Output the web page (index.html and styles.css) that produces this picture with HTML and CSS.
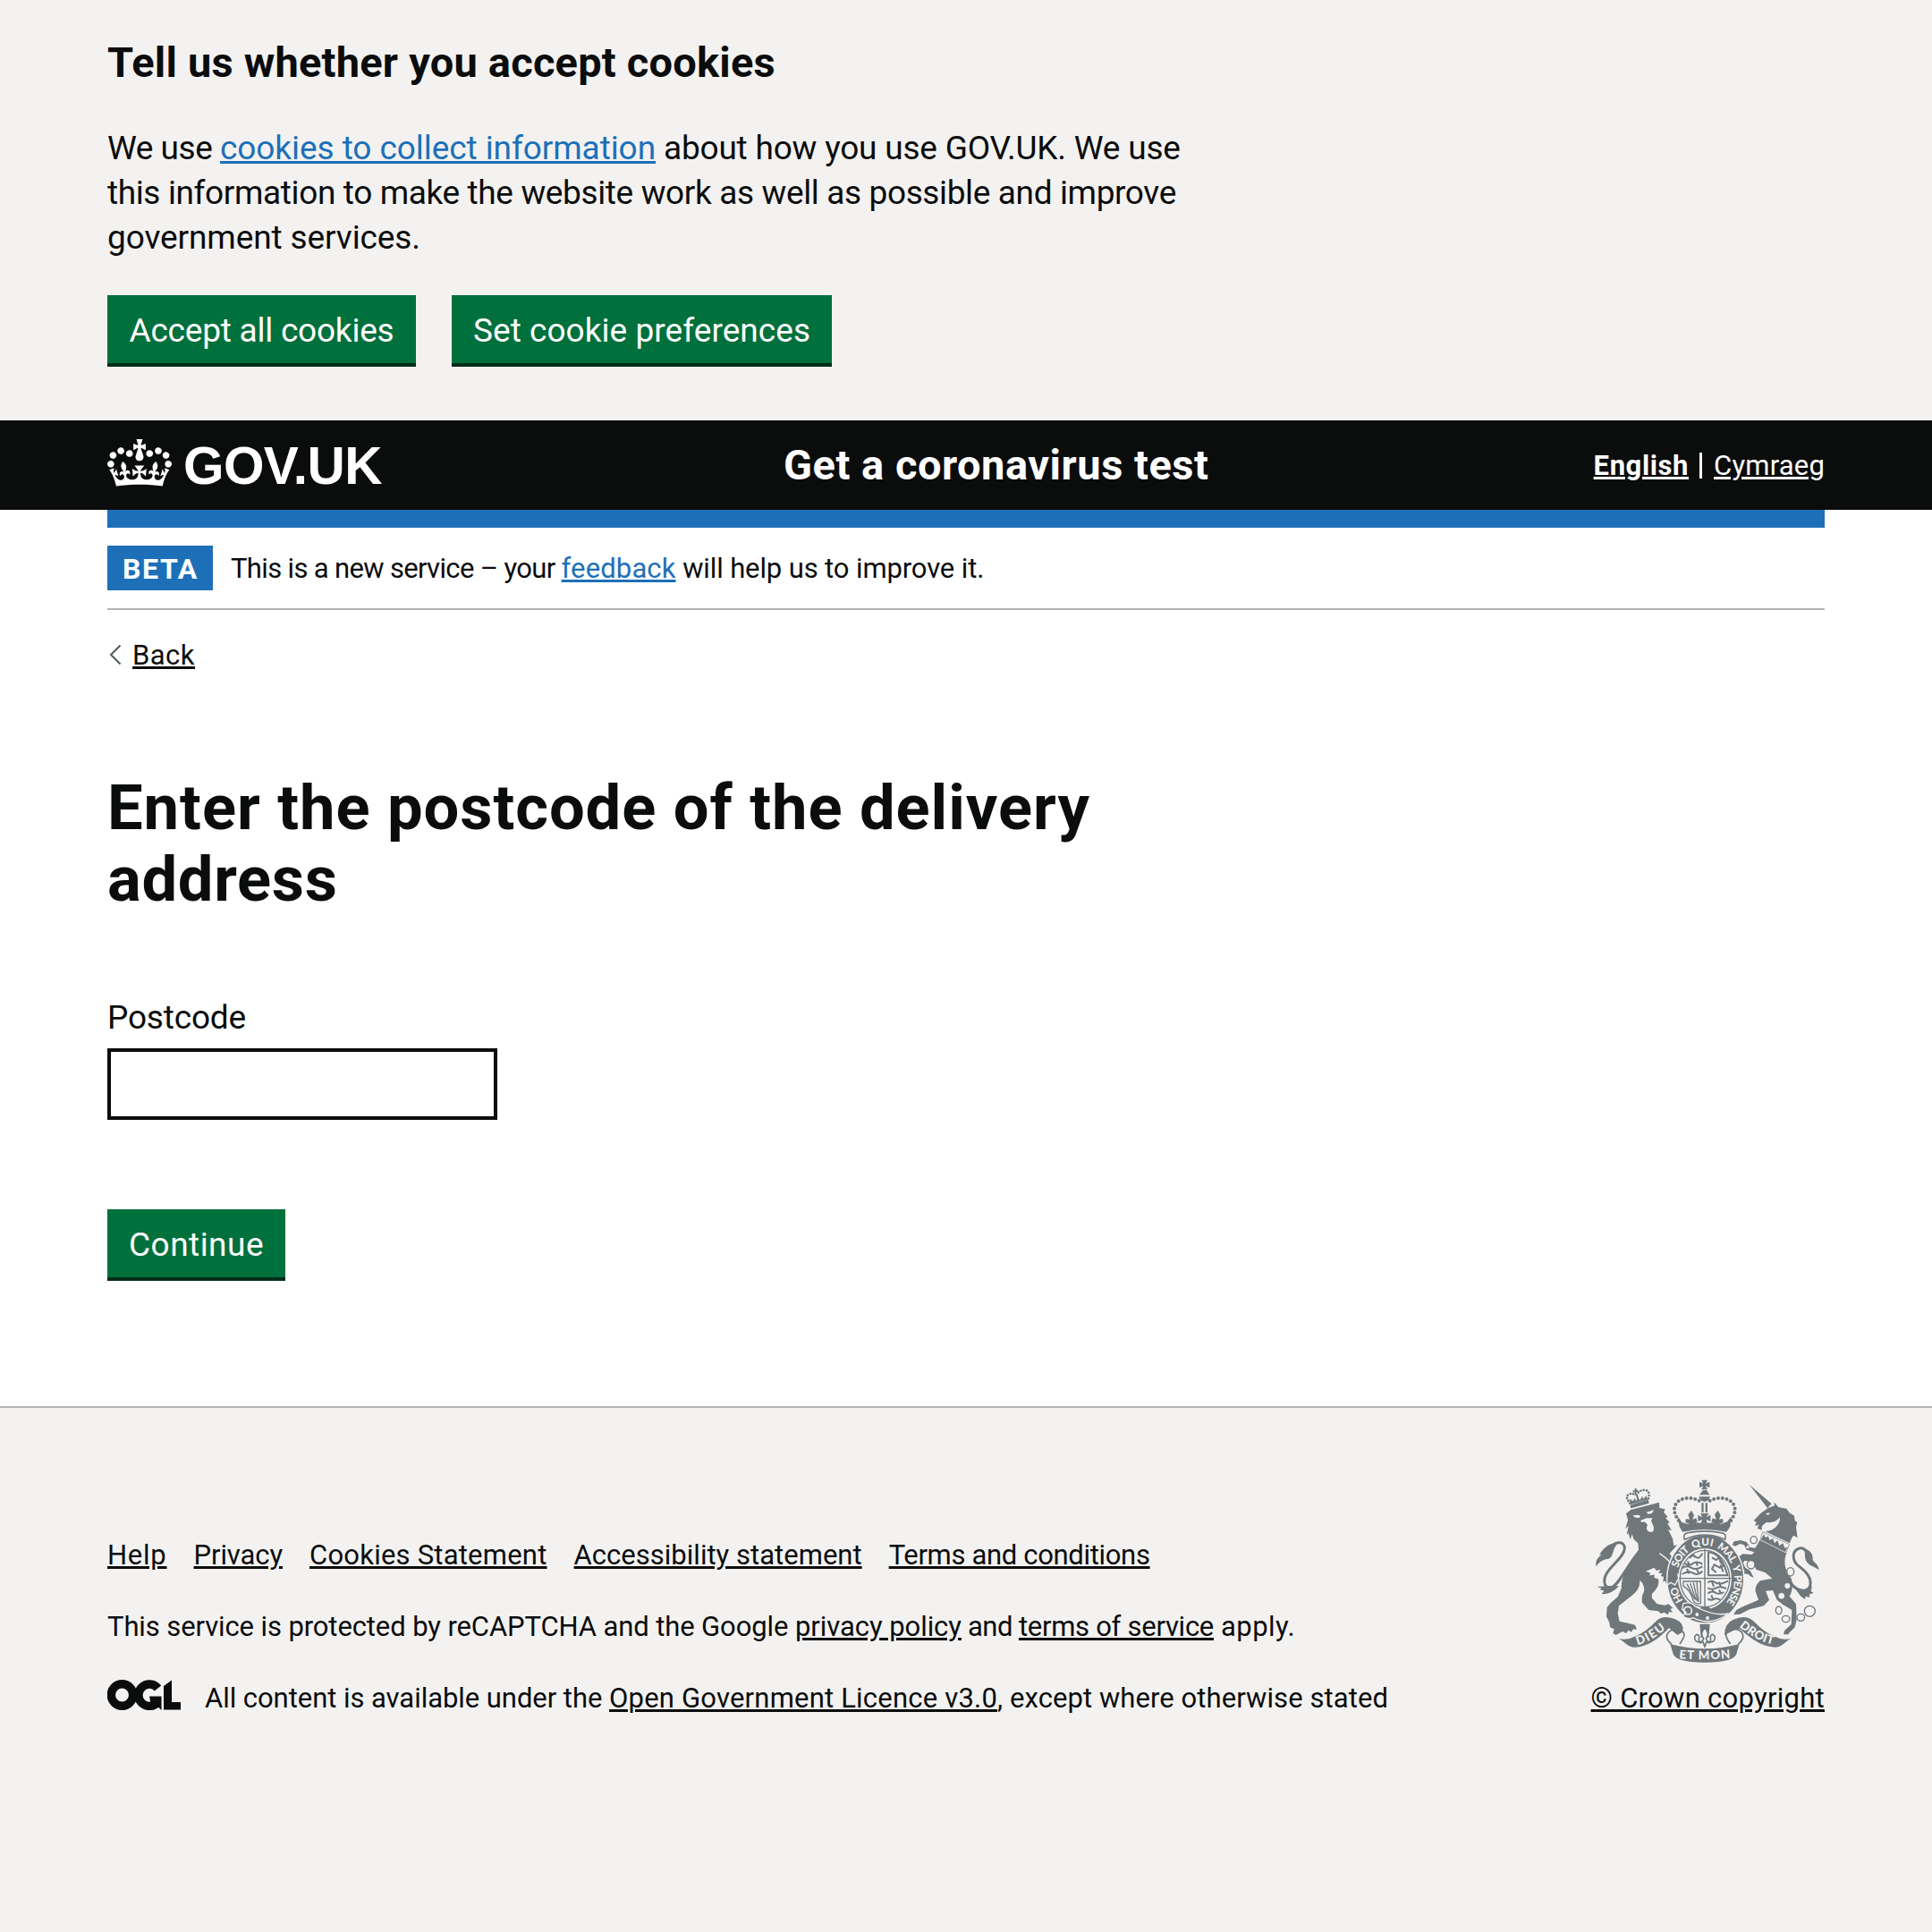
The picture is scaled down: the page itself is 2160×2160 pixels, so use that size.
FILE: index.html
```html
<!DOCTYPE html>
<html lang="en">
<head>
<meta charset="utf-8">
<title>Enter the postcode of the delivery address</title>
<link rel="stylesheet" href="styles.css">
</head>
<body>
<section class="cookie-banner">
  <div class="container">
    <h2 class="banner-title">Tell us whether you accept cookies</h2>
    <p class="banner-text"><span class="t-we">We use </span><a class="link t-cookies" href="#">cookies to collect information</a><span class="t-about"> about how you use GOV.UK. We use</span> <span class="t-info">this information to make the website work as well as possible and improve</span> <span class="t-gov">government services.</span></p>
    <div class="button-row">
      <button class="button button-accept">Accept all cookies</button>
      <button class="button button-set">Set cookie preferences</button>
    </div>
  </div>
</section>

<header class="header">
  <div class="container header-inner">
    <a class="logo" href="#">
      <svg class="crown" viewBox="0 0 132 97" aria-hidden="true"><path fill="currentColor" fill-rule="evenodd" d="M25 30.2c3.5 1.5 7.7-.2 9.1-3.7 1.5-3.6-.2-7.8-3.9-9.2-3.6-1.4-7.6.3-9.1 3.9-1.4 3.5.3 7.5 3.9 9zM9 39.5c3.6 1.5 7.8-.2 9.2-3.7 1.5-3.6-.2-7.8-3.9-9.1-3.6-1.5-7.6.2-9.1 3.8-1.4 3.5.3 7.5 3.8 9zM4.4 57.2c3.5 1.5 7.7-.2 9.1-3.8 1.5-3.6-.2-7.7-3.9-9.1-3.5-1.5-7.6.3-9.1 3.8-1.4 3.5.3 7.6 3.9 9.1zm38.3-21.4c3.5 1.5 7.7-.2 9.1-3.8 1.5-3.6-.2-7.7-3.9-9.1-3.6-1.5-7.6.3-9.1 3.8-1.3 3.6.4 7.7 3.9 9.1zm64.4-5.6c-3.6 1.5-7.8-.2-9.1-3.7-1.5-3.6.2-7.8 3.8-9.2 3.6-1.4 7.7.3 9.2 3.9 1.3 3.5-.4 7.5-3.9 9zm15.9 9.3c-3.6 1.5-7.7-.2-9.1-3.7-1.5-3.6.2-7.8 3.7-9.1 3.6-1.5 7.7.2 9.2 3.8 1.5 3.5-.3 7.5-3.8 9zm4.7 17.7c-3.6 1.5-7.8-.2-9.2-3.8-1.5-3.6.2-7.7 3.9-9.1 3.6-1.5 7.7.3 9.2 3.8 1.3 3.5-.4 7.6-3.9 9.1zM89.3 35.8c-3.6 1.5-7.8-.2-9.2-3.8-1.4-3.6.2-7.7 3.9-9.1 3.6-1.5 7.7.3 9.2 3.8 1.4 3.6-.3 7.7-3.9 9.1zM69.7 17.7l8.9 4.7V9.3l-8.9 2.8c-.2-.3-.5-.6-.9-.9L72.4 0H59.6l3.5 11.2c-.3.3-.6.5-.9.9l-8.8-2.8v13.1l8.8-4.7c.3.3.6.7.9.9l-5 15.4v.1c-.2.8-.4 1.6-.4 2.4 0 4.1 3.1 7.5 7 8.1h.2c.3 0 .7.1 1 .1.4 0 .7 0 1-.1h.2c4-.6 7.1-4.1 7.1-8.1 0-.8-.1-1.7-.4-2.4V34l-5.1-15.4c.4-.2.7-.6 1-.9zM66 92.8c16.9 0 32.8 1.1 47.1 3.2 4-16.9 8.9-26.7 14-33.5l-9.6-3.4c1 4.9 1.1 7.2 0 10.2-1.5-1.4-3-4.3-4.2-8.7L108.6 76c2.8-2 5-3.2 7.5-3.3-4.4 9.4-10 11.9-13.6 11.2-4.3-.8-6.3-4.6-5.6-7.9 1-4.7 5.7-5.9 8-.5 4.3-8.7-3-11.4-7.6-8.8 7.1-7.2 7.9-13.5 2.1-21.1-8 6.1-8.1 12.3-4.5 20.8-4.7-5.4-12.1-2.5-9.5 6.2 3.4-5.2 7.9-2 7.2 3.1-.6 4.3-6.4 7.8-13.5 7.2-10.3-.9-10.9-8-11.2-13.8 2.5-.5 7.1 1.8 11 7.3L80.2 60c-4.1 4.4-8 5.3-12.3 5.4 1.4-4.4 8-11.6 8-11.6H55.5s6.4 7.2 7.9 11.6c-4.2-.1-8-1-12.3-5.4l1.4 16.4c3.9-5.5 8.5-7.7 10.9-7.3-.3 5.8-.9 12.8-11.1 13.8-7.2.6-12.9-2.9-13.5-7.2-.7-5 3.8-8.3 7.1-3.1 2.7-8.7-4.6-11.6-9.4-6.2 3.7-8.5 3.6-14.7-4.6-20.8-5.8 7.6-5 13.9 2.2 21.1-4.7-2.6-11.9.1-7.7 8.8 2.3-5.5 7.1-4.2 8.1.5.7 3.3-1.3 7.1-5.7 7.9-3.5.7-9-1.8-13.5-11.2 2.5.1 4.7 1.3 7.5 3.3l-4.7-15.4c-1.2 4.4-2.7 7.2-4.3 8.7-1.1-3-.9-5.3 0-10.2l-9.5 3.4c5 6.9 9.9 16.7 14 33.5 14.8-2.1 30.8-3.2 47.700-3.200z"/></svg>
      <span class="logo-text">GOV.UK</span>
    </a>
    <a class="service-name" href="#">Get a coronavirus test</a>
    <nav class="languages"><a class="lang-en" href="#">English</a><span class="lang-sep"></span><a class="lang-cy" href="#">Cymraeg</a></nav>
  </div>
</header>

<div class="container page">
  <div class="phase-banner">
    <strong class="phase-tag">BETA</strong>
    <span class="phase-text"><span class="t-new">This is a new service – your </span><a class="link" href="#">feedback</a><span> will help us to improve it.</span></span>
  </div>
  <a class="back" href="#">
    <svg class="back-icon" viewBox="0 0 14 24" aria-hidden="true"><path d="M12.500 1.500 2 12l10.500 10.500"/></svg>
    <span class="back-text">Back</span>
  </a>
  <main>
    <h1 class="title">Enter the postcode of the delivery <span class="title-end">address</span></h1>
    <label class="label" for="postcode">Postcode</label>
    <input class="input" id="postcode" type="text">
    <button class="button button-continue">Continue</button>
  </main>
</div>

<footer class="footer">
  <div class="container footer-inner">
    <div class="footer-meta">
      <nav class="footer-links">
        <a class="f-help" href="#">Help</a>
        <a class="f-privacy" href="#">Privacy</a>
        <a class="f-cookies" href="#">Cookies Statement</a>
        <a class="f-access" href="#">Accessibility statement</a>
        <a class="f-terms" href="#">Terms and conditions</a>
      </nav>
      <p class="footer-line"><span class="r-this">This service is protected by reCAPTCHA and the Google </span><a href="#">privacy policy</a><span class="r-and"> and </span><a class="r-terms" href="#">terms of service</a><span class="r-apply"> apply.</span></p>
      <div class="licence">
        <svg class="ogl" viewBox="0 0 82 34" aria-hidden="true">
          <g fill="none" stroke="currentColor" stroke-width="9.500">
            <circle cx="16.500" cy="17" r="12.200"/>
            <path d="M56.500 9.500A12.200 12.200 0 1 0 56 25.500"/>
          </g>
          <path fill="currentColor" d="M47 18.500h13.500V34l-4-4-5 1-3.500-7zM63 7l9-6.500V25h10v8.500H63z"/>
        </svg>
        <p class="footer-line"><span>All content is available under the </span><a class="l-ogl" href="#">Open Government Licence v3.0</a><span class="l-except">, except where otherwise stated</span></p>
      </div>
    </div>
    <div class="crest-block">
      <svg class="crest" viewBox="72 70 750 615" aria-hidden="true">
        <defs>
          <path id="motto-arc" d="M372 484A97 112 0 1 1 502 490"/>
          <path id="dieu-arc" d="M212 625C250 616 282 594 314 566"/>
          <path id="etmon-arc" d="M352 671Q438 677 526 669"/>
          <path id="droit-arc" d="M553 563C587 593 625 617 674 625"/>
        </defs>

        <!-- lion -->
        <g class="ink">
          <path d="M174 184L190 172 285 147 286 166 305 170 300 180 314 196 306 199 320 214 313 218 327 242 315 238 330 268 334 292 346 290 320 318Q344 350 346 396L338 416 330 410 328 424 318 414 312 424 304 410 298 414 300 396 290 394 296 384 282 384 290 372 276 376 268 366 240 378 256 384 252 392 270 390 268 400 282 404C286 420 278 436 268 446Q256 456 262 470L278 488 304 492 316 488 332 502 322 504 330 516 318 514 314 524 302 516 290 520 282 512 250 508 228 484Q224 464 234 446 238 424 220 408 222 440 190 462L150 494 146 520 152 546 180 552 204 558 210 574 198 572 192 582 182 576 174 586 162 580 140 592 130 586 134 572 120 566 118 550 108 530 110 500 120 486 146 464 158 436C158 390 180 350 216 306L214 284 200 272 194 254 188 272 182 250 176 256 182 226 172 236 180 206Z"/>
          <path d="M142 282C124 282 98 296 84 324L94 322C76 332 70 348 74 362 84 344 104 336 116 336 132 330 128 304 142 290Z"/>
          <path d="M76 430L92 435 86 441 100 442 92 455Q128 454 150 428L132 426Z"/>
        </g>
        <path class="tail" d="M190 350C160 390 150 420 122 436 96 432 94 400 118 372 140 346 170 322 169 298 166 280 146 278 132 288"/>
        <path class="ink" d="M187 156L248 138 251 150 190 167Z"/>
        <path class="crown-leaf" d="M190 154L186 136 197 144 203 134 207 146 214 132 220 142 228 128 231 138 241 126 246 138"/>
        <path class="crown-cross" d="M206 100V124M197 110L215 108M209 120L214 136"/>
        <path class="small-dots" d="M187 150Q168 128 184 120 196 114 206 124M249 134Q256 108 238 106 222 104 210 120"/>
        <g class="paper">
          <path d="M196 192Q210 186 222 192L218 199Q206 200 196 192ZM242 180L268 172 260 184 248 186Z"/>
          <path d="M222 208L242 200 262 200 258 210 264 222C272 244 262 248 254 246 244 244 240 234 246 222L236 212 226 214Z"/>
        </g>

        <!-- unicorn -->
        <g class="ink">
          <path d="M587 87L662 152 648 166Z"/>
          <path d="M650 166L672 158 670 146 685 163 712 168 722 182 738 192 740 208 748 214 744 230 749 266 736 258 730 266 722 284 640 244C668 244 692 222 690 196 680 212 660 216 644 214L630 226 628 240 614 234 620 222 606 226 611 214 602 208 625 184Z"/>
          <path d="M622 274L712 318C698 350 712 384 728 402 734 424 732 446 722 462L744 488 746 540 740 566 722 584 718 590 702 590 706 576 728 556 730 508 700 490 680 474 666 442 642 444 654 474 636 494 588 506 556 522 534 524 544 508 562 498 618 474 608 446Q606 424 624 410L664 402 640 382 610 372 600 348 572 342 566 350 574 366 590 376 602 400 590 394 584 388 568 386 572 378 556 358 546 346 548 332 566 320 596 322 604 314 578 306 570 290 556 286 540 294 530 290 536 278 558 274 578 280 590 298 606 300 614 290Z"/>
          <path d="M770 303C790 304 802 320 800 340 806 352 818 352 821 374 806 362 786 360 778 344 772 330 776 318 770 303Z"/>
          <path d="M742 438Q776 452 798 426L794 446 803 450 788 456 790 466 776 462 774 472 760 462Z"/>
        </g>
        <path class="tail" d="M724 412C740 444 778 452 790 430 800 400 776 378 752 360 732 344 728 312 752 302 762 298 770 300 778 310"/>
        <path class="collar" d="M632 246L722 288 710 318 624 273Z"/>
        <path class="ink" d="M626 272L636 254 642 266 650 260 656 274 666 268 672 284 682 274 688 292 700 284 706 300 716 296 708 314Z"/>
        <path class="paper" d="M642 184L658 182 650 190Z"/>
        <g class="chain">
          <ellipse cx="602" cy="273" rx="11" ry="12"/><ellipse cx="593" cy="356" rx="13" ry="14"/>
          <ellipse cx="725" cy="380" rx="12" ry="14"/>
          <ellipse cx="686" cy="509" rx="10" ry="13"/><ellipse cx="710" cy="538" rx="13" ry="11"/><ellipse cx="760" cy="533" rx="13" ry="12"/><circle cx="790" cy="512" r="18"/>
        </g>
        <g class="paper"><circle cx="715" cy="427" r="9"/><circle cx="695" cy="461" r="10"/><circle cx="582" cy="297" r="5"/></g>

        <!-- crown -->
        <g class="ink">
          <path d="M427 72h20l-6 12 13-6v20l-13-6 6 12h-20l6-12-13 6v-20l13 6zM432 106h12l10 16h-34zM418 128h38q-3 14-19 17-16-3-19-17z"/>
          <path d="M427 149h7v32h-7zM440 149h7v32h-7zM424 184h28l-9 13 14-8v22l-14-7 4 13h-22l4-13-14 7v-22l14 8z"/>
          <path d="M393 174l9 16-5 14 12-4 4 12-20 10-20-8 2-12 12 2-5-16zM482 174l9 16-5 14 12-2 2 12-18 8-22-10 4-12 12 4-5-16z"/>
          <path d="M347 194l14 20 22 6 20-6 34 4 34-4 20 6 22-8 14-18-4 34-12 18q-74-16-148 0l-10-18z"/>
        </g>
        <g class="dots">
          <path d="M350 208C306 146 374 116 420 142"/><path d="M526 208C568 146 500 116 454 142"/>
        </g>

        <!-- garter and shield -->
        <ellipse class="garter" cx="440" cy="404" rx="129" ry="149"/>
        <path class="rim" d="M370 272Q362 252 382 249 438 238 492 249 514 252 506 272 438 240 370 272Z"/>
        <ellipse class="paper" cx="438" cy="403" rx="90" ry="102"/>
        <path class="thin" d="M438 303v202M349 402h178"/>
        <ellipse class="thin" cx="438" cy="403" rx="83" ry="95"/>
        <g class="charges">
          <path d="M386 334q12-14 22-4t22-12M370 352q16 10 28 0t32 2M362 368q14-12 30-2t38-4M362 388q22-14 36-4t32-6M398 320l8 12M380 344l6 12M408 346l6 14M378 370l8 16M410 368l8 18"/>
          <path d="M448 416q12-10 26 0t42-6M448 434q14 8 28 0t34 2M448 452q16-10 26-2t28-2M448 470q12 8 20 2t22 2M462 412l6 18M486 414l6 18M462 436l6 14M486 440l6 14M460 458l6 16"/>
          <path d="M450 314q46 4 64 78h-64zM462 332l14 8 10-8 4 14 12 14-14 6-18-10-8 14 14 12M490 356l10 24"/>
        </g>
        <path class="harp" d="M366 412h58v74q-16 4-24-8-12-40-34-50zM378 420l26 52M389 418l20 58M400 416l14 64M411 414l6 66"/>
        <path class="ink" d="M426 498h26l8 12-22 10-20-10z"/>
        <g class="motto">
          <text><textPath href="#motto-arc" startOffset="10" textLength="52">HO</textPath></text>
          <text><textPath href="#motto-arc" startOffset="124" textLength="72">SOIT</textPath></text>
          <text><textPath href="#motto-arc" startOffset="208" textLength="68">QUI</textPath></text>
          <text><textPath href="#motto-arc" startOffset="290" textLength="72">MAL</textPath></text>
          <text><textPath href="#motto-arc" startOffset="372">Y</textPath></text>
          <text><textPath href="#motto-arc" startOffset="402" textLength="98">PENSE</textPath></text>
        </g>
        <path class="paw" d="M286 318C302 329 314 339 323 350M347 386L350 402 338 424 324 416 312 424"/>
        <path class="ink outlined" d="M366 486q26-8 40 10 60 34 112 24-60 44-120 14-18 8-34-6l12-12-14-10z"/>
        <circle class="paper" cx="412" cy="523" r="6"/><circle class="paper" cx="447" cy="535" r="6"/>
        <circle class="buckle" cx="381" cy="510" r="13"/>

        <!-- fleur-de-lis -->
        <path class="ink" d="M421 555h34l-4 46h-26z"/>
        <path class="lily" d="M438 568q-18 18-4 36l-6 10q-8 4-10-6 4-16-6-18-14 6-4 22l16 6 8-4 6 18 6-18 8 4 16-6q10-16-4-22-10 2-6 18-2 10-10 6l-6-10q14-18-4-36z"/>

        <!-- scroll -->
        <path class="ribbon" d="M326 622C298 600 310 572 348 572 384 584 364 606 354 622M550 622C578 600 568 572 532 572 494 580 512 606 524 622"/>
        <g class="ink">
          <path d="M148 603Q176 612 206 596 240 582 276 544 300 522 342 540 370 552 364 582L346 592 318 568C286 602 246 634 200 633 176 630 168 612 148 603Z"/>
          <path d="M728 603Q700 612 670 596 636 582 600 544 574 522 534 540 504 552 504 592L540 574 556 572C590 602 630 634 676 633 700 630 708 612 728 603Z"/>
          <path d="M322 622Q438 654 554 622L544 656Q534 684 438 684 342 684 332 656Z"/>
        </g>
        <g>
          <text><textPath href="#dieu-arc" textLength="110">DIEU</textPath></text>
          <text><textPath href="#etmon-arc" textLength="172">ET MON</textPath></text>
          <text><textPath href="#droit-arc" textLength="130">DROIT</textPath></text>
        </g>
      </svg>
      <a class="copyright" href="#">© Crown copyright</a>
    </div>
  </div>
</footer>
</body>
</html>
```
FILE: styles.css
```css
* { box-sizing: border-box; }
body { margin: 0; background: #f3f2f1; color: #0b0c0c; font: 400 31px/40px Roboto, "Liberation Sans", sans-serif; }
h1, h2, p { margin: 0; }
a { color: inherit; text-decoration-line: underline; text-decoration-thickness: 3px; text-underline-offset: 2px; }
.container { width: 1920px; margin: 0 auto; }
.link { color: #1d70b8; }

.button { display: block; height: 80px; padding: 3px 0 0; border: 0; border-bottom: 4px solid #002d18; border-radius: 0; background: #00703c; color: #fff; font: 400 37px/73px Roboto, "Liberation Sans", sans-serif; text-align: center; }
.button-row { display: flex; gap: 40px; margin-top: 39px; }
.button-accept { width: 345px; letter-spacing: -.22px; }
.button-set { width: 425px; letter-spacing: .05px; }
.button-continue { width: 199px; margin-top: 100px; letter-spacing: .48px; }

.cookie-banner { height: 470px; padding-top: 40px; }
.banner-title { font-size: 47px; line-height: 60px; letter-spacing: .21px; }
.banner-text { width: 1240px; margin-top: 41px; font-size: 37px; line-height: 50px; }
.t-we { letter-spacing: -.48px; }
.t-cookies { letter-spacing: -.07px; }
.t-about { letter-spacing: -.2px; }
.t-info { letter-spacing: -.37px; }
.t-gov { letter-spacing: -.1px; }

.header { background: #0b0c0c; color: #fff; }
.header-inner { display: grid; grid-template-columns: 756px 1fr auto; align-items: center; height: 100px; }
.logo { display: flex; align-items: center; gap: 13px; height: 100px; text-decoration: none; }
.crown { width: 72px; height: 53px; margin-bottom: 5px; }
.logo-text { padding-top: 1px; font: 700 58.5px/60px "Liberation Sans", Arial, sans-serif; letter-spacing: -.6px; }
.service-name { font-size: 47px; line-height: 60px; font-weight: 700; letter-spacing: .52px; text-decoration: none; }
.languages { display: flex; align-items: center; padding-top: 2px; }
.lang-en { font-weight: 700; letter-spacing: .6px; }
.lang-sep { width: 3px; height: 29px; margin: 0 13px 2px 12px; background: #fff; }
.lang-cy { letter-spacing: .19px; }

.page { height: 1002px; border-top: 20px solid #1d70b8; }
body { background: linear-gradient(#f3f2f1 500px, #fff 500px, #fff 1572px, #f3f2f1 1572px); }
.phase-banner { display: flex; gap: 20px; height: 92px; padding: 20px 0; border-bottom: 2px solid #b1b4b6; }
.phase-tag { width: 118px; height: 50px; padding: 2px 0 0 1px; background: #1d70b8; color: #fff; font-size: 32px; line-height: 48px; letter-spacing: 1.6px; text-align: center; }
.phase-text { padding-top: 1px; line-height: 50px; letter-spacing: -.12px; }
.t-new { letter-spacing: -.66px; }
.phase-text .link { letter-spacing: .13px; }
.back { display: flex; align-items: center; gap: 12px; width: 98px; height: 40px; margin-top: 30px; padding-left: 2px; text-decoration: none; }
.back-icon { width: 14px; height: 24px; fill: none; stroke: #505a5f; stroke-width: 2; }
.back-text { padding-top: 2px; text-decoration: underline 3px; text-underline-offset: 2px; letter-spacing: .47px; }

.title { width: 1240px; margin-top: 111px; font-size: 70.5px; line-height: 80px; font-weight: 700; letter-spacing: .95px; }
.title-end { letter-spacing: .7px; }
.label { display: block; margin-top: 90px; font-size: 37px; line-height: 50px; letter-spacing: -.17px; }
.input { display: block; width: 436px; height: 80px; margin-top: 9px; padding: 10px; border: 4px solid #0b0c0c; border-radius: 0; background: #fff; font: inherit; }

.footer { padding-top: 80px; border-top: 2px solid #b1b4b6; background: #f3f2f1; }
.footer-inner { display: flex; justify-content: space-between; }
.footer-meta { display: flex; flex-direction: column; gap: 40px; padding-top: 65px; }
.footer-links { display: flex; gap: 30px; }
.f-help { letter-spacing: .75px; }
.f-privacy { letter-spacing: -.09px; }
.f-cookies { letter-spacing: .22px; }
.f-access { letter-spacing: .02px; }
.f-terms { letter-spacing: -.33px; }
.footer-line { white-space: nowrap; letter-spacing: -.05px; }
.r-this { letter-spacing: -.11px; }
.r-and { letter-spacing: -.57px; }
.r-terms { letter-spacing: -.28px; }
.r-apply { letter-spacing: .41px; }
.l-ogl { letter-spacing: .2px; }
.l-except { letter-spacing: .08px; }
.licence { display: flex; gap: 27px; }
.ogl { width: 82px; height: 34px; margin-top: -1px; }
.crest-block { display: flex; flex-direction: column; align-items: flex-end; }
.crest { width: 250px; height: 205px; margin: 0 6px 20px 0; }
.copyright { letter-spacing: .28px; }

.crest .ink, .crest .garter { fill: #6f777b; }
.crest .paper { fill: #f3f2f1; }
.crest .tail { fill: none; stroke: #6f777b; stroke-width: 9; }
.crest .crown-leaf { fill: #6f777b; stroke: #6f777b; stroke-width: 2; }
.crest .crown-cross { fill: none; stroke: #6f777b; stroke-width: 6; }
.crest .dots { fill: none; stroke: #6f777b; stroke-width: 12; stroke-linecap: round; stroke-dasharray: 0 14.5; }
.crest .small-dots { fill: none; stroke: #6f777b; stroke-width: 8; stroke-linecap: round; stroke-dasharray: 0 10; }
.crest .chain { fill: #f3f2f1; stroke: #6f777b; stroke-width: 4; }
.crest .rim { fill: #f3f2f1; stroke: #6f777b; stroke-width: 5; }
.crest .garter, .crest .outlined { stroke: #f3f2f1; stroke-width: 4; }
.crest .thin { fill: none; stroke: #6f777b; stroke-width: 4; }
.crest .charges { fill: none; stroke: #6f777b; stroke-width: 6; }
.crest .harp { fill: none; stroke: #6f777b; stroke-width: 4; }
.crest .collar { fill: #f3f2f1; stroke: #6f777b; stroke-width: 2; }
.crest .paw { fill: none; stroke: #f3f2f1; stroke-width: 4; }
.crest .buckle { fill: none; stroke: #f3f2f1; stroke-width: 5; }
.crest .lily { fill: #f3f2f1; stroke: #6f777b; stroke-width: 5; stroke-linejoin: round; }
.crest .ribbon { fill: #f3f2f1; stroke: #6f777b; stroke-width: 5; }
.crest text { fill: #f3f2f1; font: 900 40px Lato, "Liberation Sans", sans-serif; }
.crest .motto text { font-size: 35px; }
```
